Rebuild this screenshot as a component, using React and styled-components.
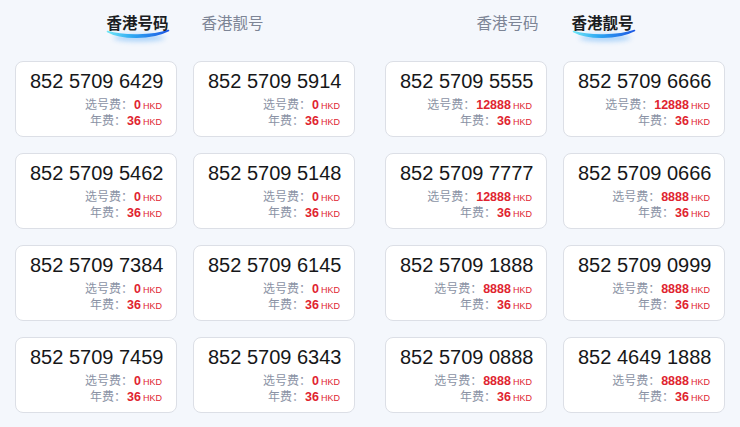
import React from "react";
import styled, { createGlobalStyle } from "styled-components";

const GlobalStyle = createGlobalStyle`
  html, body {
    margin: 0;
    padding: 0;
    background: #f4f7fc;
  }
  body {
    font-family: "Liberation Sans", "Noto Sans CJK SC", sans-serif;
  }
`;

const Page = styled.div`
  display: flex;
  width: 740px;
  height: 427px;
  overflow: hidden;
  background: #f4f7fc;
`;

const Panel = styled.div`
  width: 370px;
  padding: 0 15px;
  box-sizing: border-box;
`;

const TabBar = styled.div`
  display: flex;
  justify-content: center;
  align-items: flex-start;
  gap: 33px;
  height: 61px;
  padding-top: 11px;
  box-sizing: border-box;
`;

const Tab = styled.div`
  position: relative;
  font-family: "Noto Sans CJK SC", sans-serif;
  font-size: 15.5px;
  line-height: 22px;
  font-weight: ${(props) => (props.active ? 700 : 400)};
  color: ${(props) => (props.active ? "#1b1d22" : "#7d8596")};
`;

const TabText = styled.span`
  position: relative;
  z-index: 1;
`;

const Swoosh = styled.svg`
  position: absolute;
  left: 1px;
  top: 16px;
  width: 62px;
  height: 16px;
  z-index: 0;
  overflow: visible;
`;

const Grid = styled.div`
  display: grid;
  grid-template-columns: repeat(2, 162px);
  grid-auto-rows: 76px;
  gap: 16px;
`;

const Card = styled.div`
  display: flex;
  flex-direction: column;
  background: #ffffff;
  border: 1px solid #dcdfe6;
  border-radius: 8px;
  padding: 8px 14px 0;
  box-sizing: border-box;
`;

const Number = styled.div`
  font-size: 20px;
  line-height: 23px;
  text-align: center;
  color: #161719;
  margin-bottom: 3px;
  white-space: nowrap;
`;

const FeeRow = styled.div`
  display: flex;
  justify-content: flex-end;
  align-items: baseline;
  height: 16px;
  line-height: 16px;
`;

const FeeLabel = styled.span`
  font-family: "Noto Sans CJK SC", sans-serif;
  font-size: 12px;
  color: #8b93a5;
  margin-right: 1px;
`;

const FeeValue = styled.span`
  font-size: 12.5px;
  font-weight: 700;
  color: #e02430;
`;

const FeeUnit = styled.span`
  font-size: 9px;
  color: #e02430;
  margin-left: 2px;
`;

const SwooshIcon = ({ id }) => (
  <Swoosh viewBox="0 0 62 16">
    <defs>
      <linearGradient id={`sg-${id}`} x1="0" y1="0" x2="1" y2="0">
        <stop offset="0" stopColor="#6fe6f7" />
        <stop offset="0.4" stopColor="#2ea8f2" />
        <stop offset="1" stopColor="#1c58e4" />
      </linearGradient>
      <filter id={`sf-${id}`} x="-30%" y="-150%" width="160%" height="400%">
        <feGaussianBlur stdDeviation="2.5" />
      </filter>
    </defs>
    <ellipse
      cx="32"
      cy="11"
      rx="26"
      ry="3.5"
      fill="#3f9ff5"
      opacity="0.4"
      filter={`url(#sf-${id})`}
    />
    <path
      d="M0.5 4.5 C 14 12, 44 12.5, 61.5 3.5 C 46 9, 16 9.5, 0.5 4.5 Z"
      fill={`url(#sg-${id})`}
      stroke={`url(#sg-${id})`}
      strokeWidth="1.6"
      strokeLinejoin="round"
    />
  </Swoosh>
);

const Tabs = ({ active, id }) => (
  <TabBar>
    {["香港号码", "香港靓号"].map((t, i) => (
      <Tab key={t} active={i === active}>
        {i === active && <SwooshIcon id={`${id}-${i}`} />}
        <TabText>{t}</TabText>
      </Tab>
    ))}
  </TabBar>
);

const NumberCard = ({ num, pick }) => (
  <Card>
    <Number>{num}</Number>
    <FeeRow>
      <FeeLabel>选号费：</FeeLabel>
      <FeeValue>{pick}</FeeValue>
      <FeeUnit>HKD</FeeUnit>
    </FeeRow>
    <FeeRow>
      <FeeLabel>年费：</FeeLabel>
      <FeeValue>36</FeeValue>
      <FeeUnit>HKD</FeeUnit>
    </FeeRow>
  </Card>
);

const normal = [
  ["852 5709 6429", "0"],
  ["852 5709 5914", "0"],
  ["852 5709 5462", "0"],
  ["852 5709 5148", "0"],
  ["852 5709 7384", "0"],
  ["852 5709 6145", "0"],
  ["852 5709 7459", "0"],
  ["852 5709 6343", "0"],
];

const lucky = [
  ["852 5709 5555", "12888"],
  ["852 5709 6666", "12888"],
  ["852 5709 7777", "12888"],
  ["852 5709 0666", "8888"],
  ["852 5709 1888", "8888"],
  ["852 5709 0999", "8888"],
  ["852 5709 0888", "8888"],
  ["852 4649 1888", "8888"],
];

const NumberPanel = ({ active, items, id }) => (
  <Panel>
    <Tabs active={active} id={id} />
    <Grid>
      {items.map(([num, pick]) => (
        <NumberCard key={num} num={num} pick={pick} />
      ))}
    </Grid>
  </Panel>
);

export default function App() {
  return (
    <>
      <GlobalStyle />
      <Page>
        <NumberPanel active={0} items={normal} id="a" />
        <NumberPanel active={1} items={lucky} id="b" />
      </Page>
    </>
  );
}
